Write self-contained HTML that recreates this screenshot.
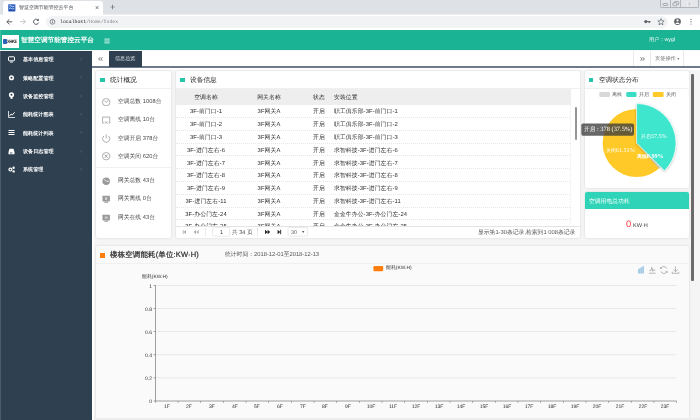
<!DOCTYPE html>
<html><head><meta charset="utf-8">
<style>
*{box-sizing:border-box;margin:0;padding:0}
html,body{text-rendering:geometricPrecision;width:700px;height:420px;overflow:hidden;background:#f5f5f5;font-family:"Liberation Sans",sans-serif;}
.a{position:absolute}
.t{position:absolute;white-space:nowrap;line-height:1;will-change:transform}
#tabstrip{left:0;top:0;width:700px;height:14px;background:#dee1e6}
#tab{left:3.3px;top:.5px;width:99.7px;height:13.5px;background:#fff;border-radius:3px 3px 0 0}
#toolbar{left:0;top:14px;width:700px;height:16px;background:#fff}
#pill{left:46px;top:16px;width:622px;height:12px;border-radius:6px;background:#f1f3f4}
#hdr{left:0;top:29.8px;width:700px;height:20.7px;background:#1ab394}
#side{left:0;top:50.5px;width:92px;height:370px;background:#2f4050}
#tabs{left:92px;top:50.5px;width:608px;height:16px;background:#fff}
#tabline{left:92px;top:66.3px;width:608px;height:1.9px;background:#6c7a89}
#strip{left:92px;top:68.2px;width:608px;height:1.4px;background:#fff}
#strip2{left:92px;top:50.5px;width:2.2px;height:370px;background:#fff}
.panel{background:#fff;border-radius:2px;box-shadow:0 0 2.5px rgba(0,0,0,.14)}
.mi{left:0;width:92px;height:18.4px}
.mi .t{left:23px;top:7.7px;font-size:5.1px;color:#fff;font-weight:bold}
.mi .ic{position:absolute;left:7.8px;top:5.3px;width:7px;height:7px}
.mi .ar{position:absolute;left:80px;top:6.6px;font-size:6px;color:#6b7986;line-height:1}
.sq{width:4.5px;height:4.5px;background:#23c6a8}
.ph{font-size:6.7px;color:#1f1f1f}
.st{font-size:5.7px;color:#444;letter-spacing:.08px}
.td{font-size:5.8px;color:#2a2a2a;letter-spacing:.12px}
.rowline{left:176px;width:394px;height:0;border-top:1px dotted #e6e6e6}
</style></head><body>
<!-- browser chrome -->
<div class="a" id="tabstrip"></div>
<div class="a" id="tab"></div>
<div class="a" id="toolbar"></div>
<div class="a" id="pill"></div>
<div class="a" style="left:103px;top:14px;width:597px;height:1px;background:#eceef1"></div><div class="a" style="left:0;top:14px;width:3.3px;height:1px;background:#eceef1"></div>
<div class="a" id="hdr"></div>
<div class="a" id="side"></div>
<div class="a" id="tabs"></div>
<div class="a" id="strip"></div><div class="a" id="strip2"></div><div class="a" id="tabline"></div>

<!-- chrome details -->
<svg class="a" style="left:8px;top:3.5px" width="8" height="8" viewBox="0 0 8 8"><rect x=".2" y=".2" width="7.2" height="7.2" rx=".6" fill="#2f63c4"/><path d="M1.2 2.2Q2.4 1 3.6 2.2T6.2 2.2M1.2 4.6Q2.4 3.4 3.6 4.6T6.2 4.6" stroke="#dfe8f8" stroke-width=".8" fill="none"/><rect x="1" y="5.8" width="5.6" height=".8" fill="#1c3f8a"/></svg>
<div class="t" style="left:18.7px;top:6.8px;font-size:4.95px;color:#3c4043">智慧空调节能管控云平台</div>
<div class="t" style="left:95px;top:4.5px;font-size:7px;color:#5f6368">×</div>
<div class="t" style="left:110px;top:3.3px;font-size:9px;color:#5f6368">+</div>
<div class="a" style="left:660px;top:0;width:39px;height:7.5px;border:1px solid #b3b6bb;border-top:0;border-radius:0 0 2px 2px;background:#e4e6ea"></div>
<div class="a" style="left:670px;top:0;width:1px;height:7px;background:#b3b6bb"></div>
<div class="a" style="left:680px;top:0;width:1px;height:7px;background:#b3b6bb"></div>
<svg class="a" style="left:660px;top:0" width="40" height="8" viewBox="0 0 40 8"><g fill="none" stroke="#8d9096" stroke-width=".7"><rect x="2.8" y="3.5" width="5" height="2" rx="1"/><rect x="12.8" y="2.8" width="4" height="3" rx=".9"/><path d="M14.5 2.6V2.2Q14.5 1.6 15.2 1.6H18Q18.7 1.6 18.7 2.2V4Q18.7 4.6 18 4.6H17.2"/></g><path d="M27.3 2L31.7 5.6M31.7 2L27.3 5.6" stroke="#f4f5f7" stroke-width="1.1"/><path d="M28.2 2.6L30.8 5M30.8 2.6L28.2 5" stroke="#9a9da3" stroke-width=".5"/></svg>


<svg class="a" style="left:0;top:14px" width="700" height="16" viewBox="0 0 700 16">
 <g fill="none" stroke="#5f6368" stroke-width="1">
  <path d="M12.3 7.8H7M9.4 5.3L6.8 7.8L9.4 10.3"/>
  <path d="M20 7.7H25.3M22.9 5.2L25.5 7.7L22.9 10.2" stroke="#c4c7cb"/>
  <path d="M38.3 6.3A2.6 2.6 0 1 0 38.6 8.6"/>
  <circle cx="52.5" cy="7.8" r="2.4" stroke-width=".7"/>
  
  <path d="M661 4.6L661.9 6.8L664.2 7L662.4 8.5L663 10.8L661 9.5L659 10.8L659.6 8.5L657.8 7L660.1 6.8Z" stroke-width=".7"/>
 </g>
 <path d="M38.8 4.6V7H36.4Z" fill="#5f6368"/>
 <rect x="52.2" y="7.2" width=".7" height="2" fill="#5f6368"/><rect x="52.2" y="6" width=".7" height=".7" fill="#5f6368"/>
 <circle cx="677.5" cy="7.6" r="3.4" fill="#5f6368"/><circle cx="677.5" cy="6.4" r="1.1" fill="#fff"/><path d="M675.2 9.5Q677.5 7.4 679.8 9.5Q677.5 10.6 675.2 9.5Z" fill="#fff"/>
 <circle cx="645.8" cy="7.6" r="1.6" fill="#5f6368"/><rect x="646.5" y="7.1" width="4" height="1" fill="#5f6368"/><rect x="648.6" y="7.6" width="1.4" height="1.4" fill="#5f6368"/>
 <circle cx="691" cy="5.4" r=".6" fill="#5f6368"/><circle cx="691" cy="7.7" r=".6" fill="#5f6368"/><circle cx="691" cy="10" r=".6" fill="#5f6368"/>
</svg>
<div class="t" style="left:59.5px;top:20.6px;font-size:4.85px;font-family:'Liberation Mono',monospace;color:#202124">localhost<span style="color:#80868b">/Home/Index</span></div>
<!-- app header -->
<div class="a" style="left:2px;top:35px;width:16.5px;height:12.5px;background:#fff"></div>
<div class="a" style="left:3px;top:38.6px;width:3.6px;height:5.4px;background:#2a62b8;border-radius:.8px"></div>
<div class="t" style="left:7.2px;top:39.6px;font-size:4.6px;font-weight:bold;color:#222;letter-spacing:-.35px;transform-origin:0 0;transform:scaleX(.86)">XHKE</div>
<div class="t" style="left:21px;top:37.8px;font-size:6.64px;font-family:'Liberation Serif',serif;font-weight:bold;color:#fff">智慧空调节能管控云平台</div>
<svg class="a" style="left:104px;top:38px" width="7" height="6" viewBox="0 0 7 6"><path d="M.4 1.1H5.7M.4 3H5.7M.4 4.9H5.7" stroke="#eefaf7" stroke-width=".85" fill="none"/></svg>
<div class="t" style="left:649px;top:38.2px;font-size:5.2px;color:#fff">用户：wygl</div>

<!-- sidebar -->
<div class="a mi" style="top:50.50px"><svg class="ic" viewBox="0 0 7 7"><rect x="0.5" y="0.8" width="6" height="4" rx=".6" fill="none" stroke="#fff" stroke-width="1"/><rect x="2" y="5.6" width="3" height=".9" fill="#fff"/></svg><div class="t">基本信息管理</div><div class="ar">›</div></div>
<div class="a mi" style="top:68.85px"><svg class="ic" viewBox="0 0 7 7"><circle cx="3.5" cy="3.7" r="1.8" fill="none" stroke="#fff" stroke-width="1.5"/></svg><div class="t">策略配置管理</div><div class="ar">›</div></div>
<div class="a mi" style="top:87.20px"><svg class="ic" viewBox="0 0 7 7"><circle cx="3.5" cy="2.8" r="2.6" fill="#fff"/><rect x="2.5" y="5" width="2" height="1.8" fill="#fff"/><circle cx="3.5" cy="2.8" r="1" fill="#2f4050"/></svg><div class="t">设备监控管理</div><div class="ar">›</div></div>
<div class="a mi" style="top:105.55px"><svg class="ic" viewBox="0 0 7 7"><path d="M.5 0V6.5H7" fill="none" stroke="#fff" stroke-width=".8"/><path d="M1.5 5L3.2 3L4.3 4L6.6 1.3" fill="none" stroke="#fff" stroke-width="1"/></svg><div class="t">能耗统计图表</div><div class="ar">›</div></div>
<div class="a mi" style="top:123.90px"><svg class="ic" viewBox="0 0 7 7"><rect x=".5" y="1" width="6" height="1" fill="#fff"/><rect x=".5" y="3" width="6" height="1" fill="#fff"/><rect x=".5" y="5" width="6" height="1" fill="#fff"/></svg><div class="t">能耗统计列表</div><div class="ar">›</div></div>
<div class="a mi" style="top:142.25px"><svg class="ic" viewBox="0 0 7 7"><path d="M1.5 .8H5.5L6.5 4V6.3H.5V4Z" fill="#fff"/><rect x="2" y="4.6" width="2.4" height=".8" fill="#2f4050"/></svg><div class="t">设备日志管理</div><div class="ar">›</div></div>
<div class="a mi" style="top:160.60px"><svg class="ic" viewBox="0 0 7 7"><circle cx="2.4" cy="3.6" r="2" fill="#fff"/><circle cx="2.4" cy="3.6" r=".8" fill="#2f4050"/><circle cx="5.6" cy="1.8" r="1.2" fill="#fff"/><circle cx="5.6" cy="5.4" r="1.2" fill="#fff"/></svg><div class="t">系统管理</div><div class="ar">›</div></div>
<!-- tabs row -->
<div class="a" style="left:109px;top:50.5px;width:33px;height:16.5px;background:#2f4050"></div>
<div class="t" style="left:115px;top:57px;font-size:5.1px;color:#dfe4ed">信息总览</div>
<svg class="a" style="left:98px;top:56.5px" width="5" height="4" viewBox="0 0 5 4"><path d="M2.2 .3L.6 2L2.2 3.7M4.4 .3L2.8 2L4.4 3.7" fill="none" stroke="#5a5a5a" stroke-width=".85"/></svg>
<div class="a" style="left:633px;top:50.5px;width:1px;height:15.5px;background:#e7eaec"></div>
<div class="a" style="left:650px;top:50.5px;width:1px;height:15.5px;background:#e7eaec"></div>
<div class="a" style="left:683.2px;top:50.5px;width:1px;height:15.5px;background:#e7eaec"></div>
<svg class="a" style="left:640px;top:56.5px" width="5" height="4" viewBox="0 0 5 4"><path d="M.6 .3L2.2 2L.6 3.7M2.8 .3L4.4 2L2.8 3.7" fill="none" stroke="#5a5a5a" stroke-width=".85"/></svg>
<div class="t" style="left:655.3px;top:56.8px;font-size:5.2px;color:#777">页签操作 <span style="font-size:4px">▾</span></div>

<!-- panels -->
<div class="a panel" style="left:95.5px;top:71px;width:75.5px;height:166.7px"></div>
<div class="a panel" style="left:176px;top:71px;width:404.2px;height:166.7px"></div>
<div class="a panel" style="left:584.5px;top:71px;width:104.7px;height:117px"></div>
<div class="a panel" style="left:584.5px;top:192.3px;width:104.7px;height:45.4px"></div>
<div class="a panel" style="left:95.5px;top:246px;width:593.7px;height:180px;background:#fafafa"></div>
<div class="a" style="left:95.5px;top:88.2px;width:75.5px;height:1px;background:#eef0f1"></div>
<div class="a" style="left:176px;top:88.2px;width:404.2px;height:1px;background:#eef0f1"></div>
<div class="a" style="left:584.5px;top:88.2px;width:105px;height:1px;background:#eef0f1"></div>
<div class="a sq" style="left:100px;top:77.8px"></div>
<div class="t ph" style="left:110px;top:77.5px">统计概况</div>
<div class="a sq" style="left:180px;top:77.8px"></div>
<div class="t ph" style="left:190px;top:77.5px">设备信息</div>
<div class="a sq" style="left:588.5px;top:77.8px"></div>
<div class="t ph" style="left:598.8px;top:77.5px;font-size:6.6px">空调状态分布</div>
<svg class="a" style="left:102.2px;top:97.9px" width="8.4" height="8.4" viewBox="0 0 7 7"><circle cx="3.5" cy="3.5" r="3.1" fill="none" stroke="#919191" stroke-width=".6"/><path d="M2 2.2L3.5 3.7L5.4 2" stroke="#919191" stroke-width=".6" fill="none"/></svg><div class="t st" style="left:118px;top:100.2px">空调总数 1008台</div>
<svg class="a" style="left:102.2px;top:116.1px" width="8.4" height="8.4" viewBox="0 0 7 7"><path d="M1.6 5.9H.5V.9H6.5V5.9H5.4" fill="none" stroke="#919191" stroke-width=".6"/><path d="M2.6 4.5L4.4 6.3M4.4 4.5L2.6 6.3" stroke="#919191" stroke-width=".65"/></svg><div class="t st" style="left:118px;top:118.4px">空调离线 10台</div>
<svg class="a" style="left:102.2px;top:134.4px" width="8.4" height="8.4" viewBox="0 0 7 7"><path d="M1.5 1.7A3 3 0 1 0 5.5 1.7" fill="none" stroke="#919191" stroke-width=".6"/><path d="M3.5 .3V3.6" stroke="#919191" stroke-width=".6"/></svg><div class="t st" style="left:118px;top:136.7px">空调开启 378台</div>
<svg class="a" style="left:102.2px;top:152.4px" width="8.4" height="8.4" viewBox="0 0 7 7"><circle cx="3.5" cy="3.5" r="3.1" fill="none" stroke="#919191" stroke-width=".6"/><path d="M2.2 2.2L4.8 4.8M4.8 2.2L2.2 4.8" stroke="#919191" stroke-width=".7"/></svg><div class="t st" style="left:118px;top:154.7px">空调关闭 620台</div>
<svg class="a" style="left:102.2px;top:177.2px" width="8.4" height="8.4" viewBox="0 0 7 7"><circle cx="3.5" cy="3.5" r="3.1" fill="#999"/><path d="M3.5 3.5L1.5 1.8" stroke="#fff" stroke-width=".6"/><path d="M3.5 3.5H6" stroke="#fff" stroke-width=".6"/></svg><div class="t st" style="left:118px;top:179.3px">网关总数 43台</div>
<svg class="a" style="left:102.2px;top:195.4px" width="8.4" height="8.4" viewBox="0 0 7 7"><rect x=".4" y=".6" width="6.2" height="4.8" rx=".5" fill="#999"/><rect x="2" y="5.6" width="3" height=".9" fill="#999"/><path d="M2.5 2L4.5 4M4.5 2L2.5 4" stroke="#fff" stroke-width=".7"/></svg><div class="t st" style="left:118px;top:197.3px">网关离线 0台</div>
<svg class="a" style="left:102.2px;top:213.9px" width="8.4" height="8.4" viewBox="0 0 7 7"><rect x=".4" y=".6" width="6.2" height="4.8" rx=".5" fill="#999"/><rect x="2" y="5.6" width="3" height=".9" fill="#999"/><rect x="2.2" y="2" width="2.6" height="2" fill="#c9c9c9"/></svg><div class="t st" style="left:118px;top:216.2px">网关在线 43台</div>
<div class="a" style="left:95.5px;top:167px;width:75.5px;height:1px;background:#eef0f1"></div>

<!-- table -->
<div class="a" style="left:176px;top:89.4px;width:394.6px;height:15.2px;background:#eeeeee"></div>
<div class="a" style="left:570.2px;top:89.4px;width:0;height:135px;border-left:1px dotted #ececec"></div>
<div class="a" style="left:574.8px;top:106.5px;width:2.2px;height:33.5px;background:#959595;border-radius:1px"></div>
<div class="t td" style="left:165.6px;width:80px;text-align:center;top:96.0px">空调名称</div><div class="t td" style="left:229.3px;width:80px;text-align:center;top:96.3px">网关名称</div><div class="t td" style="left:278.6px;width:80px;text-align:center;top:96.3px">状态</div><div class="t td" style="left:334.3px;top:96.3px">安装位置</div>
<div class="t td" style="left:165.6px;width:80px;text-align:center;top:110.3px">3F-前门口-1</div><div class="t td" style="left:229.3px;width:80px;text-align:center;top:110.3px">3F网关A</div><div class="t td" style="left:278.6px;width:80px;text-align:center;top:110.3px">开启</div><div class="t td" style="left:334.3px;top:110.3px">职工俱乐部-3F-前门口-1</div>
<div class="a rowline" style="top:116.9px"></div>
<div class="t td" style="left:165.6px;width:80px;text-align:center;top:123.1px">3F-前门口-2</div><div class="t td" style="left:229.3px;width:80px;text-align:center;top:123.1px">3F网关A</div><div class="t td" style="left:278.6px;width:80px;text-align:center;top:123.1px">开启</div><div class="t td" style="left:334.3px;top:123.1px">职工俱乐部-3F-前门口-2</div>
<div class="a rowline" style="top:129.7px"></div>
<div class="t td" style="left:165.6px;width:80px;text-align:center;top:135.9px">3F-前门口-3</div><div class="t td" style="left:229.3px;width:80px;text-align:center;top:135.9px">3F网关A</div><div class="t td" style="left:278.6px;width:80px;text-align:center;top:135.9px">开启</div><div class="t td" style="left:334.3px;top:135.9px">职工俱乐部-3F-前门口-3</div>
<div class="a rowline" style="top:142.5px"></div>
<div class="t td" style="left:165.6px;width:80px;text-align:center;top:148.7px">3F-进门左右-6</div><div class="t td" style="left:229.3px;width:80px;text-align:center;top:148.7px">3F网关A</div><div class="t td" style="left:278.6px;width:80px;text-align:center;top:148.7px">开启</div><div class="t td" style="left:334.3px;top:148.7px">求智科技-3F-进门左右-6</div>
<div class="a rowline" style="top:155.3px"></div>
<div class="t td" style="left:165.6px;width:80px;text-align:center;top:161.5px">3F-进门左右-7</div><div class="t td" style="left:229.3px;width:80px;text-align:center;top:161.5px">3F网关A</div><div class="t td" style="left:278.6px;width:80px;text-align:center;top:161.5px">开启</div><div class="t td" style="left:334.3px;top:161.5px">求智科技-3F-进门左右-7</div>
<div class="a rowline" style="top:168.1px"></div>
<div class="t td" style="left:165.6px;width:80px;text-align:center;top:174.3px">3F-进门左右-8</div><div class="t td" style="left:229.3px;width:80px;text-align:center;top:174.3px">3F网关A</div><div class="t td" style="left:278.6px;width:80px;text-align:center;top:174.3px">开启</div><div class="t td" style="left:334.3px;top:174.3px">求智科技-3F-进门左右-8</div>
<div class="a rowline" style="top:180.9px"></div>
<div class="t td" style="left:165.6px;width:80px;text-align:center;top:187.1px">3F-进门左右-9</div><div class="t td" style="left:229.3px;width:80px;text-align:center;top:187.1px">3F网关A</div><div class="t td" style="left:278.6px;width:80px;text-align:center;top:187.1px">开启</div><div class="t td" style="left:334.3px;top:187.1px">求智科技-3F-进门左右-9</div>
<div class="a rowline" style="top:193.7px"></div>
<div class="t td" style="left:165.6px;width:80px;text-align:center;top:199.9px">3F-进门左右-11</div><div class="t td" style="left:229.3px;width:80px;text-align:center;top:199.9px">3F网关A</div><div class="t td" style="left:278.6px;width:80px;text-align:center;top:199.9px">开启</div><div class="t td" style="left:334.3px;top:199.9px">求智科技-3F-进门左右-11</div>
<div class="a rowline" style="top:206.5px"></div>
<div class="t td" style="left:165.6px;width:80px;text-align:center;top:212.7px">3F-办公门左-24</div><div class="t td" style="left:229.3px;width:80px;text-align:center;top:212.7px">3F网关A</div><div class="t td" style="left:278.6px;width:80px;text-align:center;top:212.7px">开启</div><div class="t td" style="left:334.3px;top:212.7px">金金牛办公-3F-办公门左-24</div>
<div class="a rowline" style="top:219.3px"></div>

<!-- partial row + pager -->
<div class="a" style="left:176px;top:220.3px;width:394px;height:5.3px;overflow:hidden">
 <div class="t td" style="left:-10.4px;width:80px;text-align:center;top:5.1px">3F-办公门左-25</div>
 <div class="t td" style="left:53.3px;width:80px;text-align:center;top:5.1px">3F网关A</div>
 <div class="t td" style="left:102.6px;width:80px;text-align:center;top:5.1px">开启</div>
 <div class="t td" style="left:158.3px;top:5.1px">金金牛办公-3F-办公门左-25</div>
</div>
<div class="a" style="left:176px;top:225.5px;width:404.2px;height:1px;background:#e4e4e4"></div>
<svg class="a" style="left:176px;top:226px" width="140" height="12" viewBox="0 0 140 12">
 <g fill="#adadad"><rect x="6.8" y="4" width=".8" height="4"/><path d="M10 4L7.6 6L10 8Z"/><path d="M20 4L17.6 6L20 8ZM22.6 4L20.2 6L22.6 8Z"/></g>
 <rect x="29.3" y="1.5" width=".7" height="9" fill="#e2e2e2"/><rect x="81" y="1.5" width=".7" height="9" fill="#e2e2e2"/>
 <rect x="36.6" y="1.2" width="17" height="9" rx="1" fill="#fff" stroke="#dcdcdc" stroke-width=".6"/>
 <g fill="#222"><path d="M89 3.8L91.6 6L89 8.2ZM91.6 3.8L94.2 6L91.6 8.2Z"/><path d="M101.6 3.8L104.2 6L101.6 8.2Z"/><rect x="104.2" y="3.8" width=".9" height="4.4"/></g>
 <rect x="112" y="1.5" width="19.6" height="8.6" rx="1" fill="#fff" stroke="#dcdcdc" stroke-width=".6"/>
 <path d="M126 5.2H128.4L127.2 6.8Z" fill="#222"/>
</svg>
<div class="t" style="left:219.5px;top:230.9px;font-size:5.6px;color:#444">1</div>
<div class="t" style="left:232px;top:230.8px;font-size:5.6px;color:#555">共 34 页</div>
<div class="t" style="left:290.5px;top:231px;font-size:5.4px;color:#555">30</div>
<div class="t" style="left:478px;top:230.8px;font-size:5.8px;color:#555">显示第1-30条记录,检索到1 008条记录</div>

<!-- pie -->
<svg class="a" style="left:580px;top:88px" width="112" height="102" viewBox="580 88 112 102">
 <defs><filter id="sh" x="-20%" y="-20%" width="140%" height="140%"><feDropShadow dx="0" dy=".6" stdDeviation="1" flood-color="#000" flood-opacity=".3"/></filter></defs>
 <circle cx="636.6" cy="143" r="34" fill="#ffca28"/>
 <path d="M636.6 143L660.64 167.04A34 34 0 0 1 659.08 168.50Z" fill="#d8d8d8"/>
 <path d="M636.6 143L636.60 103.60A39.4 39.4 0 0 1 664.46 170.86Z" fill="#3ce6cd" stroke="#fff" stroke-width=".7" filter="url(#sh)"/>
 <rect x="599.3" y="92" width="10.7" height="5" rx="1.2" fill="#d8d8d8"/>
 <rect x="626.3" y="92" width="10.2" height="5" rx="1.2" fill="#3bdcc4"/>
 <rect x="652.8" y="92" width="10.8" height="5" rx="1.2" fill="#ffca28"/>
 <rect x="581.3" y="123.6" width="52.7" height="12.1" rx="1.6" fill="#3c3c3c" fill-opacity=".78"/>
</svg>
<div class="t" style="left:612px;top:93px;font-size:5px;color:#555">离线</div>
<div class="t" style="left:638.6px;top:93px;font-size:5px;color:#555">开启</div>
<div class="t" style="left:665.6px;top:93px;font-size:5px;color:#555">关闭</div>
<div class="t" style="left:583.6px;top:127.3px;font-size:6.4px;color:#fff;font-family:'Liberation Serif',serif"><span style="font-size:5.7px;vertical-align:.4px">开启</span> : 378 (37.5%)</div>
<div class="t" style="left:641.2px;top:134px;font-size:4.9px;color:#fff;font-family:'Liberation Serif',serif">开启<span style="font-size:6.2px">37.5%</span></div>
<div class="t" style="left:605.7px;top:147.7px;font-size:4.9px;color:#fff;font-family:'Liberation Serif',serif">关闭<span style="font-size:6.2px">61.51%</span></div>
<div class="t" style="left:637px;top:154.3px;font-size:4.9px;color:#fff;font-weight:bold;font-family:'Liberation Serif',serif">离线<span style="font-size:6.2px">0.99%</span></div>
<!-- power -->
<div class="a" style="left:584.5px;top:192.3px;width:104.7px;height:16.8px;background:#2fd4b8;border-radius:2px 2px 0 0"></div>
<div class="t" style="left:589.4px;top:199.8px;font-size:5.8px;color:#fff">空调用电总功耗</div>
<div class="t" style="left:625.8px;top:218.6px;font-size:9.4px;color:#ff3b3b">0</div>
<div class="t" style="left:633px;top:223.5px;font-size:5.6px;color:#444">KW·H</div>
<!-- page scrollbar -->
<div class="a" style="left:691.4px;top:73.8px;width:2.3px;height:207px;background:#6a6a6a;border-radius:1px"></div>

<!-- chart -->
<svg class="a" style="left:90px;top:260px" width="600" height="160" viewBox="90 260 600 160">
<rect x="155.4" y="285.00" width="521.2" height=".8" fill="#e3e3e3"/>
<rect x="155.4" y="308.12" width="521.2" height=".8" fill="#e3e3e3"/>
<rect x="155.4" y="331.24" width="521.2" height=".8" fill="#e3e3e3"/>
<rect x="155.4" y="354.36" width="521.2" height=".8" fill="#e3e3e3"/>
<rect x="155.4" y="377.48" width="521.2" height=".8" fill="#e3e3e3"/>
<rect x="153.6" y="285.05" width="1.8" height=".7" fill="#777"/>
<rect x="153.6" y="308.17" width="1.8" height=".7" fill="#777"/>
<rect x="153.6" y="331.29" width="1.8" height=".7" fill="#777"/>
<rect x="153.6" y="354.41" width="1.8" height=".7" fill="#777"/>
<rect x="153.6" y="377.53" width="1.8" height=".7" fill="#777"/>
<rect x="153.6" y="400.65" width="1.8" height=".7" fill="#777"/>
<rect x="155.05" y="285.4" width=".7" height="115.6" fill="#777"/>
<rect x="155.4" y="400.65" width="521.2" height=".7" fill="#777"/>
<rect x="155.10" y="401.00" width=".6" height="1.8" fill="#777"/>
<rect x="177.76" y="401.00" width=".6" height="1.8" fill="#777"/>
<rect x="200.42" y="401.00" width=".6" height="1.8" fill="#777"/>
<rect x="223.08" y="401.00" width=".6" height="1.8" fill="#777"/>
<rect x="245.74" y="401.00" width=".6" height="1.8" fill="#777"/>
<rect x="268.40" y="401.00" width=".6" height="1.8" fill="#777"/>
<rect x="291.07" y="401.00" width=".6" height="1.8" fill="#777"/>
<rect x="313.73" y="401.00" width=".6" height="1.8" fill="#777"/>
<rect x="336.39" y="401.00" width=".6" height="1.8" fill="#777"/>
<rect x="359.05" y="401.00" width=".6" height="1.8" fill="#777"/>
<rect x="381.71" y="401.00" width=".6" height="1.8" fill="#777"/>
<rect x="404.37" y="401.00" width=".6" height="1.8" fill="#777"/>
<rect x="427.03" y="401.00" width=".6" height="1.8" fill="#777"/>
<rect x="449.69" y="401.00" width=".6" height="1.8" fill="#777"/>
<rect x="472.35" y="401.00" width=".6" height="1.8" fill="#777"/>
<rect x="495.01" y="401.00" width=".6" height="1.8" fill="#777"/>
<rect x="517.67" y="401.00" width=".6" height="1.8" fill="#777"/>
<rect x="540.33" y="401.00" width=".6" height="1.8" fill="#777"/>
<rect x="563.00" y="401.00" width=".6" height="1.8" fill="#777"/>
<rect x="585.66" y="401.00" width=".6" height="1.8" fill="#777"/>
<rect x="608.32" y="401.00" width=".6" height="1.8" fill="#777"/>
<rect x="630.98" y="401.00" width=".6" height="1.8" fill="#777"/>
<rect x="653.64" y="401.00" width=".6" height="1.8" fill="#777"/>
<rect x="676.30" y="401.00" width=".6" height="1.8" fill="#777"/>
<rect x="373.4" y="266" width="9.8" height="5.3" rx="1.2" fill="#ff7d0c"/>
<g fill="#a4cbe6"><path d="M638 273.6V269.5L640 268V273.6ZM640.2 273.6V268L642 266.8V273.6ZM642.2 273.6V266.6L644 266V273.6Z"/></g>
<g fill="none" stroke="#8a8a8a" stroke-width=".6"><path d="M649 273.2H655.6"/><path d="M649.3 270.6L651 270.6L651.8 267.3L652.8 271.3L653.6 269.8L655.4 270"/><path d="M666.7 268.6A3.1 3.1 0 0 0 661 268.2M661 271.4A3.1 3.1 0 0 0 666.7 271.8"/><path d="M660.5 267V268.6H662M667.2 273V271.4H665.7"/><path d="M675.5 266.5V271.5M673.4 269.6L675.5 271.6L677.6 269.6M672.2 271.8V273.3H678.8V271.8"/></g>
</svg>
<div class="a" style="left:95.5px;top:263px;width:593.7px;height:1px;background:#f0f0f0"></div>
<div class="a sq" style="left:100px;top:253px;background:#ff7d0c"></div>
<div class="t" style="left:110px;top:251.3px;font-size:7.5px;letter-spacing:.12px;color:#2b2b2b;-webkit-text-stroke:.2px #2b2b2b">楼栋空调能耗(单位:KW·H)</div>
<div class="t" style="left:225px;top:253.2px;font-size:5.8px;color:#555">统计时间：2018-12-01至2018-12-13</div>
<div class="t" style="left:385.6px;top:266.8px;font-size:4.9px;color:#333">能耗(KW.H)</div>
<div class="t" style="left:142.4px;top:276.2px;font-size:4.9px;color:#333">能耗(KW.H)</div>
<div class="t" style="left:122.2px;width:30px;text-align:right;top:284.8px;font-size:5px;color:#2a2a2a">1</div>
<div class="t" style="left:122.2px;width:30px;text-align:right;top:307.9px;font-size:5px;color:#2a2a2a">0.8</div>
<div class="t" style="left:122.2px;width:30px;text-align:right;top:331.0px;font-size:5px;color:#2a2a2a">0.6</div>
<div class="t" style="left:122.2px;width:30px;text-align:right;top:354.2px;font-size:5px;color:#2a2a2a">0.4</div>
<div class="t" style="left:122.2px;width:30px;text-align:right;top:377.3px;font-size:5px;color:#2a2a2a">0.2</div>
<div class="t" style="left:122.2px;width:30px;text-align:right;top:400.4px;font-size:5px;color:#2a2a2a">0</div>
<div class="t" style="left:151.7px;width:30px;text-align:center;top:405px;font-size:5px;color:#2a2a2a">1F</div>
<div class="t" style="left:174.4px;width:30px;text-align:center;top:405px;font-size:5px;color:#2a2a2a">2F</div>
<div class="t" style="left:197.1px;width:30px;text-align:center;top:405px;font-size:5px;color:#2a2a2a">3F</div>
<div class="t" style="left:219.7px;width:30px;text-align:center;top:405px;font-size:5px;color:#2a2a2a">4F</div>
<div class="t" style="left:242.4px;width:30px;text-align:center;top:405px;font-size:5px;color:#2a2a2a">5F</div>
<div class="t" style="left:265.0px;width:30px;text-align:center;top:405px;font-size:5px;color:#2a2a2a">6F</div>
<div class="t" style="left:287.7px;width:30px;text-align:center;top:405px;font-size:5px;color:#2a2a2a">7F</div>
<div class="t" style="left:310.4px;width:30px;text-align:center;top:405px;font-size:5px;color:#2a2a2a">8F</div>
<div class="t" style="left:333.0px;width:30px;text-align:center;top:405px;font-size:5px;color:#2a2a2a">9F</div>
<div class="t" style="left:355.7px;width:30px;text-align:center;top:405px;font-size:5px;color:#2a2a2a">10F</div>
<div class="t" style="left:378.3px;width:30px;text-align:center;top:405px;font-size:5px;color:#2a2a2a">11F</div>
<div class="t" style="left:401.0px;width:30px;text-align:center;top:405px;font-size:5px;color:#2a2a2a">12F</div>
<div class="t" style="left:423.7px;width:30px;text-align:center;top:405px;font-size:5px;color:#2a2a2a">13F</div>
<div class="t" style="left:446.3px;width:30px;text-align:center;top:405px;font-size:5px;color:#2a2a2a">14F</div>
<div class="t" style="left:469.0px;width:30px;text-align:center;top:405px;font-size:5px;color:#2a2a2a">15F</div>
<div class="t" style="left:491.6px;width:30px;text-align:center;top:405px;font-size:5px;color:#2a2a2a">16F</div>
<div class="t" style="left:514.3px;width:30px;text-align:center;top:405px;font-size:5px;color:#2a2a2a">17F</div>
<div class="t" style="left:537.0px;width:30px;text-align:center;top:405px;font-size:5px;color:#2a2a2a">18F</div>
<div class="t" style="left:559.6px;width:30px;text-align:center;top:405px;font-size:5px;color:#2a2a2a">19F</div>
<div class="t" style="left:582.3px;width:30px;text-align:center;top:405px;font-size:5px;color:#2a2a2a">20F</div>
<div class="t" style="left:604.9px;width:30px;text-align:center;top:405px;font-size:5px;color:#2a2a2a">21F</div>
<div class="t" style="left:627.6px;width:30px;text-align:center;top:405px;font-size:5px;color:#2a2a2a">22F</div>
<div class="t" style="left:650.3px;width:30px;text-align:center;top:405px;font-size:5px;color:#2a2a2a">23F</div>
<div class="a" style="left:94.2px;top:418px;width:606px;height:2px;background:#ededed"></div>
<div class="a" style="left:0;top:0;width:1px;height:420px;background:rgba(255,255,255,.14)"></div>
</body></html>
